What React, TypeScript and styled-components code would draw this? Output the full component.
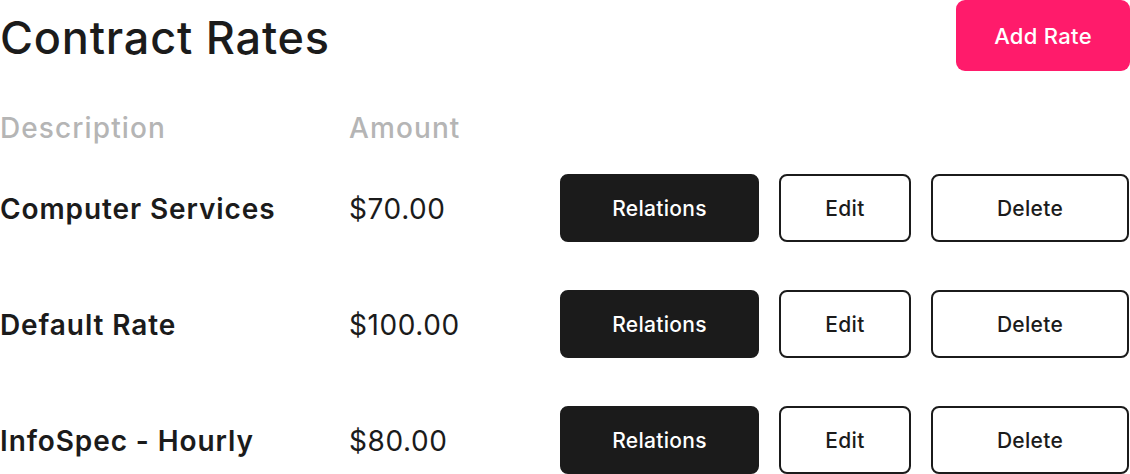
import React from 'react';
import styled, { createGlobalStyle } from 'styled-components';

const GlobalStyle = createGlobalStyle`
  html, body {
    margin: 0;
    padding: 0;
    background: #ffffff;
  }
  body {
    font-family: Inter, 'Noto Sans', sans-serif;
    color: #1b1b1b;
  }
`;

const Page = styled.div`
  width: 1130px;
  height: 474px;
  overflow: hidden;
`;

const TitleBar = styled.div`
  display: flex;
  justify-content: space-between;
  align-items: center;
  height: 71px;
`;

const Title = styled.h1`
  margin: 0;
  padding-top: 4px;
  font-size: 45px;
  font-weight: 500;
  letter-spacing: 0.8px;
  color: #1b1b1b;
`;

const AddButton = styled.button`
  width: 174px;
  height: 71px;
  border: none;
  border-radius: 9px;
  background: #ff1b6b;
  color: #ffffff;
  font-family: inherit;
  font-size: 22px;
  font-weight: 500;
  letter-spacing: 0.3px;
  cursor: pointer;
`;

const Grid = styled.div`
  display: grid;
  grid-template-columns: 349px 211px 1fr;
  align-items: center;
`;

const HeaderRow = styled(Grid)`
  margin-top: 37px;
  height: 40px;
`;

const HeaderCell = styled.span`
  font-size: 28px;
  font-weight: 500;
  letter-spacing: 1.1px;
  color: #b5b5b5;
`;

const Body = styled.div`
  display: flex;
  flex-direction: column;
  gap: 48px;
  margin-top: 26px;
`;

const Row = styled(Grid)`
  height: 68px;
`;

const Name = styled.span`
  padding-top: 2px;
  font-size: 28px;
  font-weight: 600;
  letter-spacing: 0.9px;
  color: #1b1b1b;
`;

const Amount = styled.span`
  padding-top: 2px;
  font-size: 28px;
  font-weight: 400;
  letter-spacing: 0.6px;
  color: #1b1b1b;
`;

const Actions = styled.div`
  display: flex;
  gap: 20px;
`;

const ActionButton = styled.button<{ $dark?: boolean; $width: number }>`
  width: ${(p) => p.$width}px;
  height: 68px;
  box-sizing: border-box;
  border-radius: 8px;
  border: 2px solid #1b1b1b;
  background: ${(p) => (p.$dark ? '#1b1b1b' : '#ffffff')};
  color: ${(p) => (p.$dark ? '#ffffff' : '#1b1b1b')};
  font-family: inherit;
  font-size: 21px;
  font-weight: 500;
  letter-spacing: 0.3px;
  cursor: pointer;
`;

const rates = [
  { description: 'Computer Services', amount: 70 },
  { description: 'Default Rate', amount: 100 },
  { description: 'InfoSpec - Hourly', amount: 80 },
];

const App = () => {
  return (
    <Page>
      <GlobalStyle />
      <TitleBar>
        <Title>Contract Rates</Title>
        <AddButton>Add Rate</AddButton>
      </TitleBar>

      <HeaderRow>
        <HeaderCell>Description</HeaderCell>
        <HeaderCell>Amount</HeaderCell>
      </HeaderRow>

      <Body>
        {rates.map((rate) => (
          <Row key={rate.description}>
            <Name>{rate.description}</Name>
            <Amount>
              {rate.amount.toLocaleString('en-US', { style: 'currency', currency: 'USD' })}
            </Amount>
            <Actions>
              <ActionButton $dark $width={199}>Relations</ActionButton>
              <ActionButton $width={132}>Edit</ActionButton>
              <ActionButton $width={198}>Delete</ActionButton>
            </Actions>
          </Row>
        ))}
      </Body>
    </Page>
  );
};

export default App;
